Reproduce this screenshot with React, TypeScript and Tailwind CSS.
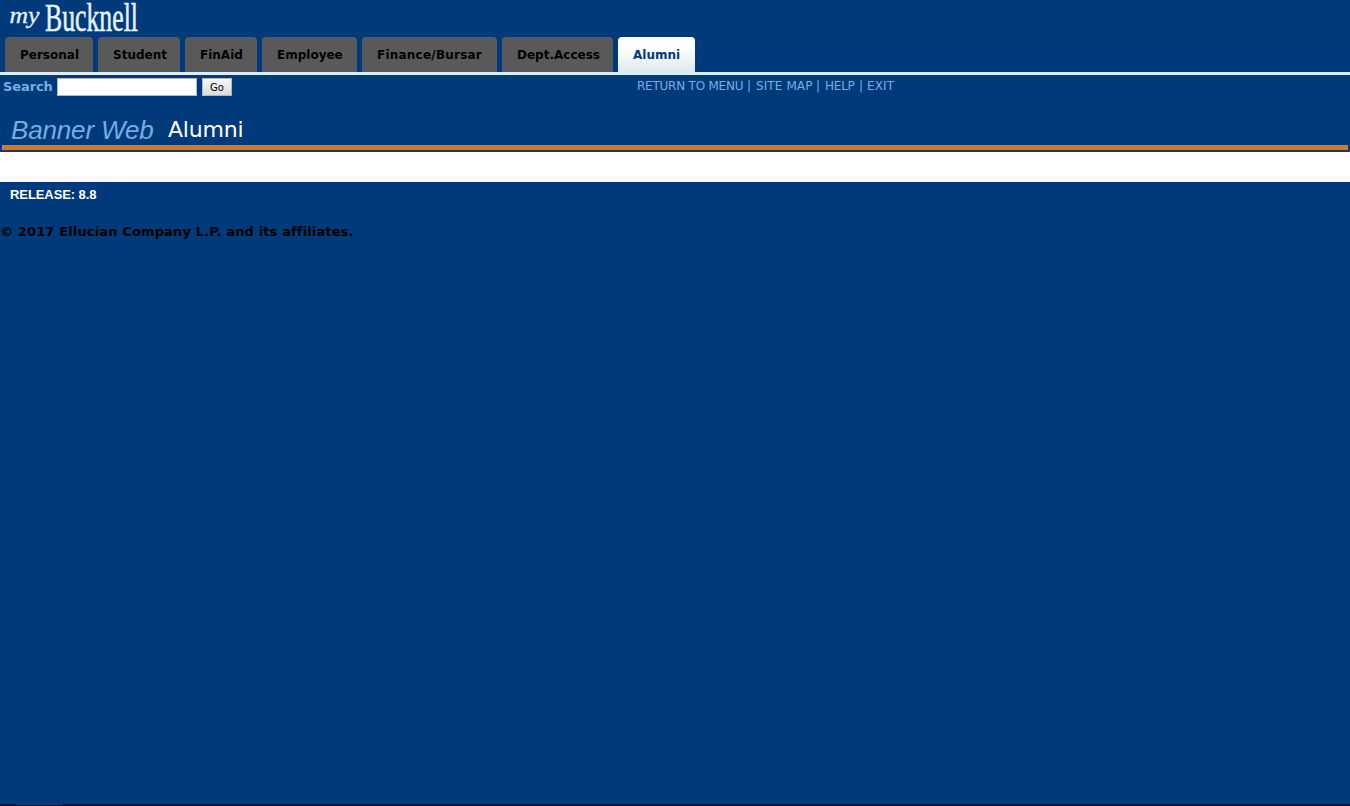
import React from "react";

const tabs = [
  { label: "Personal", width: "w-[88px]" },
  { label: "Student", width: "w-[82px]" },
  { label: "FinAid", width: "w-[72px]" },
  { label: "Employee", width: "w-[95px]" },
  { label: "Finance/Bursar", width: "w-[135px]", spacing: "tracking-[0.22px]" },
  { label: "Dept.Access", width: "w-[111px]" },
  { label: "Alumni", width: "w-[77px]", active: true },
];

function Logo() {
  return (
    <svg width="150" height="37" viewBox="0 0 150 37" className="block overflow-visible" aria-label="my Bucknell">
      <g fill="#e4f3fc" stroke="#e4f3fc" fontFamily="Liberation Serif, serif">
        <text x="9.5" y="22.5" fontSize="24" fontStyle="italic" strokeWidth="0.3" textLength="30" lengthAdjust="spacingAndGlyphs">
          my
        </text>
        <text x="45" y="31.4" fontSize="41" strokeWidth="0.6" textLength="93" lengthAdjust="spacingAndGlyphs">
          Bucknell
        </text>
      </g>
    </svg>
  );
}

function Tabs() {
  return (
    <nav className="flex h-[35px] gap-[5px] pl-[5px]">
      {tabs.map((t) => (
        <a
          key={t.label}
          className={`h-[35px] shrink-0 rounded-t-[4px] pl-[15px] text-[12px] leading-[36px] font-bold ${t.width} ${t.spacing ?? ""} ${
            t.active ? "bg-linear-to-b from-white from-30% to-[#dce9ec] text-[#003a7a]" : "bg-[#595959] text-black"
          }`}
        >
          {t.label}
        </a>
      ))}
    </nav>
  );
}

export default function App() {
  return (
    <div className="flex h-[806px] w-full flex-col overflow-hidden bg-[#003a7a] font-['DejaVu_Sans',sans-serif] whitespace-nowrap">
      <header>
        <Logo />
        <Tabs />
        <div className="h-[3px] bg-[#d8eefb]" />
      </header>

      <div className="flex h-[37px] items-start">
        <form className="flex w-[637px] pl-[3px] pt-[3px]" onSubmit={(e) => e.preventDefault()}>
          <label htmlFor="search" className="w-[54px] text-[13px] leading-[17px] font-bold tracking-[-0.1px] text-[#75aee3]">
            Search
          </label>
          <input id="search" className="h-[18px] w-[140px] border border-[#b3b8c0] bg-white px-1 text-[11px] outline-none" />
          <button className="ml-[5px] h-[18px] w-[30px] border border-[#b5b5b5] bg-linear-to-b from-[#f6f6f6] to-[#dcdcdc] text-[10px] leading-[17px] text-black">
            Go
          </button>
        </form>
        <div className="flex pt-[3px] text-[12px] leading-[16px] tracking-[-0.23px] text-[#75aee3]">
          <a className="w-[110px]">RETURN TO MENU</a>
          <span className="w-[9px]">|</span>
          <a className="w-[60px] tracking-[0.1px]">SITE MAP</a>
          <span className="w-[9px]">|</span>
          <a className="w-[34px]">HELP</a>
          <span className="w-[8px]">|</span>
          <a className="tracking-[0.1px]">EXIT</a>
        </div>
      </div>

      <div className="flex h-[33px] items-start pl-[11px]">
        <span className="w-[157px] pt-[3px] font-['Liberation_Sans',sans-serif] text-[26px] leading-[30px] tracking-[-0.15px] text-[#75aee3] italic">
          Banner Web
        </span>
        <h1 className="pt-[3px] text-[22px] leading-[30px] tracking-[-0.2px] text-white">Alumni</h1>
      </div>
      <div className="h-[7px] border-b-2 border-[#243654] px-[2px]">
        <div className="h-[5px] bg-[#d8791f]" />
      </div>
      <div className="h-[30px] bg-white" />

      <footer className="flex-1">
        <p className="pt-[5px] pl-[10px] font-['Liberation_Sans',sans-serif] text-[13px] leading-[16px] font-bold tracking-[-0.08px] text-white">
          RELEASE: 8.8
        </p>
        <p className="pt-[20px] text-[13px] leading-[17px] font-bold tracking-[0.14px] text-black">
          © 2017 Ellucian Company L.P. and its affiliates.
        </p>
      </footer>
      <div className="flex h-[2px] bg-[#001238]">
        <div className="ml-4 h-px w-[47px] bg-[#203c60]" />
      </div>
    </div>
  );
}
